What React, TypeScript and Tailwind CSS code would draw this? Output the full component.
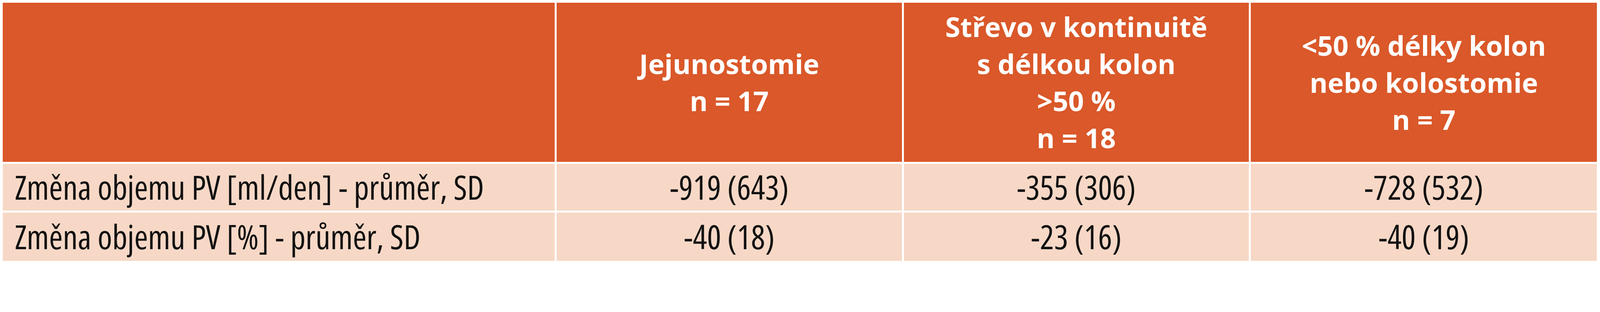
import React from 'react';

const headers: string[][] = [
  ['Jejunostomie', 'n = 17'],
  ['Střevo v kontinuitě', 's délkou kolon', '>50 %', 'n = 18'],
  ['<50 % délky kolon', 'nebo kolostomie', 'n = 7'],
];

const rows: { label: string; values: string[] }[] = [
  { label: 'Změna objemu PV [ml/den] - průměr, SD', values: ['-919 (643)', '-355 (306)', '-728 (532)'] },
  { label: 'Změna objemu PV [%] - průměr, SD', values: ['-40 (18)', '-23 (16)', '-40 (19)'] },
];

export default function App() {
  return (
    <div className="w-full h-[682px] bg-white pt-[7px] pl-[7px] pr-[8px] font-['Open_Sans',sans-serif]">
      <div className="grid grid-cols-[1686fr_1054fr_1054fr_1057fr] grid-rows-[408px_120px_124px] gap-[5px]">
        <div className="bg-[#da5829]" />
        {headers.map((lines, i) => (
          <div key={i} className="bg-[#da5829] flex flex-col items-center justify-center text-white font-bold text-[70px] leading-[95px] text-center">
            {lines.map((l, j) => (
              <span key={j} className="whitespace-nowrap">{l}</span>
            ))}
          </div>
        ))}
        {rows.map((row, r) => (
          <React.Fragment key={r}>
            <div className="bg-[#f7d8c6] flex items-center pl-[31px] text-[85px] text-[#111] font-stretch-[75%] whitespace-nowrap overflow-hidden">
              {row.label}
            </div>
            {row.values.map((v, i) => (
              <div key={i} className="bg-[#f7d8c6] flex items-center justify-center text-[85px] text-[#111] font-stretch-[75%]">
                {v}
              </div>
            ))}
          </React.Fragment>
        ))}
      </div>
    </div>
  );
}
